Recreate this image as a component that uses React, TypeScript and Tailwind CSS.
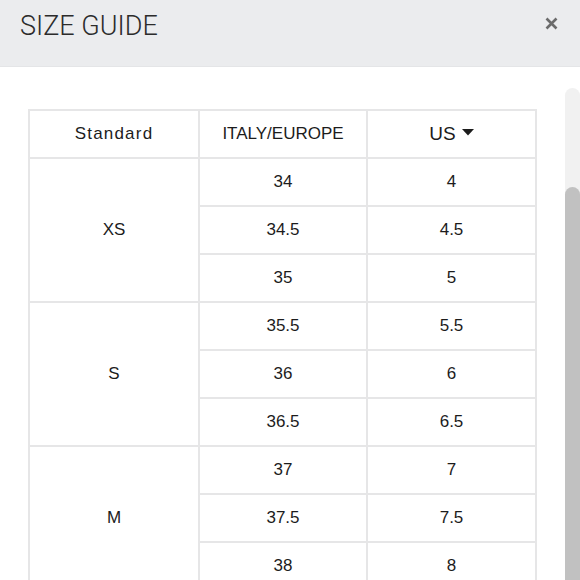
import React from "react";

const groups = [
  { label: "XS", rows: [["34", "4"], ["34.5", "4.5"], ["35", "5"]] },
  { label: "S", rows: [["35.5", "5.5"], ["36", "6"], ["36.5", "6.5"]] },
  { label: "M", rows: [["37", "7"], ["37.5", "7.5"], ["38", "8"]] },
];

const cell = "border-2 border-[#e6e6e7] text-center align-middle h-[48px] p-0";

export default function App() {
  return (
    <div className="flex h-[580px] w-[580px] flex-col overflow-hidden bg-white text-[#1c1c1c] [font-family:'Liberation_Sans',Arial,sans-serif]">
      <div className="flex h-[67px] shrink-0 items-start justify-between border-b border-[#e4e5e7] bg-[#ebecee] pl-[20px] pr-[22px]">
        <h2 className="mt-[10px] text-[27px] font-light leading-[32px] text-[#2b2b2b] [font-family:Roboto,sans-serif]">
          SIZE GUIDE
        </h2>
        <button className="mt-[17px] text-[#6b6b6b]" aria-label="Close">
          <svg width="13" height="13" viewBox="0 0 13 13" fill="none" stroke="currentColor" strokeWidth="2.6">
            <path d="M1.5 1.5l10 10M11.5 1.5l-10 10" />
          </svg>
        </button>
      </div>
      <div className="flex min-h-0 flex-1">
        <div className="flex-1 pl-[28px] pt-[42px]">
          <table className="w-[507px] table-fixed border-collapse text-[17px]">
            <colgroup>
              <col className="w-[170px]" />
              <col className="w-[168px]" />
              <col className="w-[169px]" />
            </colgroup>
            <thead>
              <tr>
                <th className={`${cell} font-normal tracking-[1.2px]`}>Standard</th>
                <th className={`${cell} font-normal`}>ITALY/EUROPE</th>
                <th className={`${cell} font-normal`}>
                  <span className="inline-flex items-center gap-[6px] text-[19px]">
                    US
                    <svg width="12" height="7" viewBox="0 0 12 7" className="mb-[4px]">
                      <path d="M0 0h12L6 6.5z" fill="#1c1c1c" />
                    </svg>
                  </span>
                </th>
              </tr>
            </thead>
            <tbody>
              {groups.map((g) =>
                g.rows.map((r, i) => (
                  <tr key={g.label + r[0]}>
                    {i === 0 && (
                      <td rowSpan={3} className={cell}>
                        {g.label}
                      </td>
                    )}
                    <td className={cell}>{r[0]}</td>
                    <td className={cell}>{r[1]}</td>
                  </tr>
                ))
              )}
            </tbody>
          </table>
        </div>
        <div className="mt-[21px] flex w-[15px] shrink-0 flex-col rounded-t-[8px] bg-[#f1f1f1]">
          <div className="mt-[99px] flex-1 rounded-t-[8px] bg-[#c1c1c1]" />
        </div>
      </div>
    </div>
  );
}
